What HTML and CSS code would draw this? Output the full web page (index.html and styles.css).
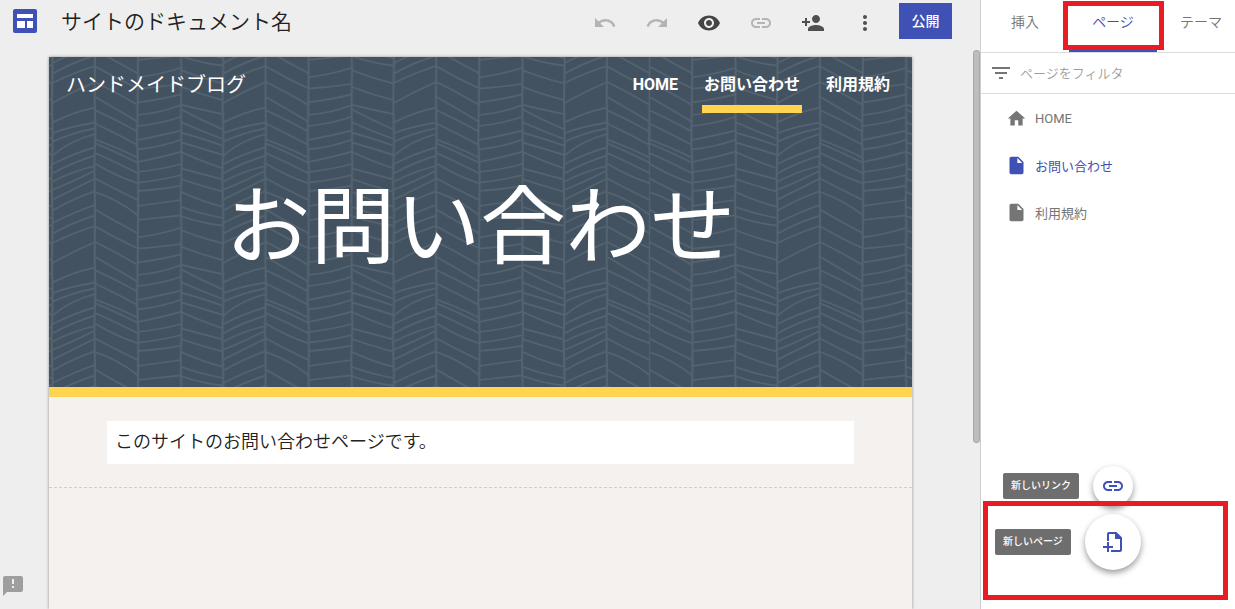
FILE: index.html
```html
<!DOCTYPE html>
<html lang="ja">
<head>
<meta charset="utf-8">
<title>サイトのドキュメント名</title>
<link rel="stylesheet" href="styles.css">
</head>
<body>
<main class="editor">
  <header class="toolbar">
    <svg class="logo" viewBox="0 0 24 24" aria-hidden="true"><rect width="24" height="24" rx="2" fill="#3f51b5"/><path fill="#fff" d="M4 5h16v4H4zM4 12h8v7H4zM14 12h6v7h-6z"/></svg>
    <input class="doc-name" type="text" aria-label="ドキュメント名" value="サイトのドキュメント名">
    <div class="tools">
      <button class="tool faded" aria-label="元に戻す"><svg viewBox="0 0 24 24"><path d="M12.500 8c-2.650 0-5.050.99-6.900 2.600L2 7v9h9l-3.620-3.620c1.390-1.160 3.160-1.880 5.120-1.880 3.540 0 6.550 2.310 7.600 5.500l2.370-.78C21.080 11.030 17.150 8 12.500 8z"/></svg></button>
      <button class="tool faded" aria-label="やり直す"><svg viewBox="0 0 24 24"><path d="M18.400 10.600C16.550 8.990 14.150 8 11.500 8c-4.650 0-8.580 3.030-9.960 7.220L3.900 16c1.050-3.190 4.050-5.500 7.600-5.500 1.950 0 3.730.72 5.120 1.880L13 16h9V7l-3.600 3.600z"/></svg></button>
      <button class="tool preview" aria-label="プレビュー"><svg viewBox="0 0 24 24"><path d="M12 4.500C7 4.500 2.730 7.610 1 12c1.730 4.390 6 7.500 11 7.500s9.270-3.110 11-7.500c-1.730-4.390-6-7.500-11-7.500zM12 17c-2.760 0-5-2.240-5-5s2.240-5 5-5 5 2.240 5 5-2.240 5-5 5zm0-8c-1.660 0-3 1.340-3 3s1.340 3 3 3 3-1.340 3-3-1.340-3-3-3z"/></svg></button>
      <button class="tool faded" aria-label="リンクをコピー"><svg viewBox="0 0 24 24"><path d="M3.900 12c0-1.710 1.390-3.100 3.100-3.100h4V7H7c-2.760 0-5 2.240-5 5s2.240 5 5 5h4v-1.900H7c-1.710 0-3.100-1.390-3.100-3.100zM8 13h8v-2H8v2zm9-6h-4v1.900h4c1.710 0 3.100 1.390 3.100 3.100s-1.390 3.100-3.100 3.100h-4V17h4c2.760 0 5-2.240 5-5s-2.240-5-5-5z"/></svg></button>
      <button class="tool" aria-label="他のユーザーと共有"><svg viewBox="0 0 24 24"><path d="M15 12c2.210 0 4-1.790 4-4s-1.790-4-4-4-4 1.790-4 4 1.790 4 4 4zm-9-2V7H4v3H1v2h3v3h2v-3h3v-2H6zm9 4c-2.670 0-8 1.340-8 4v2h16v-2c0-2.660-5.330-4-8-4z"/></svg></button>
      <button class="tool" aria-label="その他"><svg viewBox="0 0 24 24"><path d="M12 8c1.100 0 2-.9 2-2s-.9-2-2-2-2 .9-2 2 .9 2 2 2zm0 2c-1.100 0-2 .9-2 2s.9 2 2 2 2-.9 2-2-.9-2-2-2zm0 6c-1.100 0-2 .9-2 2s.9 2 2 2 2-.9 2-2-.9-2-2-2z"/></svg></button>
    </div>
    <button class="publish">公開</button>
  </header>

  <article class="site">
    <header class="hero">
      <svg class="hero-bg" aria-hidden="true">
        <defs>
          <g id="weave" fill="none" stroke="#53636f" stroke-width="5">
            <path d="M0 68Q70 34 128 23M0 100Q60 78 128 68M0 126Q60 98 128 85M0 168Q50 124 128 102M0 193Q60 162 128 142M0 221Q60 188 128 167M0 246Q60 214 128 198M0 270Q60 246 128 212M0 300Q60 270 128 236M0 333Q60 298 128 274M0 370Q70 335 128 315M0 402Q60 368 128 347M0 430Q60 400 128 378M0 490Q60 456 128 427"/>
            <path d="M128 -10Q190 25 257 65M128 30Q190 58 257 95M128 70Q190 100 257 135M128 118Q200 145 257 173M128 129Q190 155 257 188M128 158Q190 185 257 220M128 190Q190 228 257 250M128 235Q190 268 257 300M128 275Q200 300 257 345M128 328Q190 365 257 400M128 378Q190 415 257 445M128 425Q190 455 257 495"/>
            <path d="M257 45Q330 38 387 15M257 78Q330 70 387 50M257 120Q330 106 387 92M257 148Q330 140 387 119M257 186Q330 172 387 155M257 216Q330 208 387 192M257 248Q330 240 387 225M257 273Q330 268 387 257M257 318Q330 308 387 300M257 360Q330 352 387 346M257 412Q330 402 387 383M257 446Q330 440 387 432M257 487Q330 478 387 463"/>
            <path d="M387 14Q440 28 512 42M387 28Q450 62 512 88M387 66Q440 90 512 117M387 98Q440 112 512 137M387 127Q450 145 512 165M387 155Q440 180 512 205M387 205Q450 222 512 238M387 237Q440 255 512 275M387 275Q450 305 512 320M387 320Q440 340 512 354M387 348Q450 370 512 377M387 390Q440 412 512 430M387 440Q450 465 512 480"/>
          </g>
          <g id="tile">
            <use href="#weave"/><use href="#weave" y="-480"/><use href="#weave" y="480"/>
            <path d="M0 0L2 120L-1 240L2 360L0 480M128 0L130 90L127 200L129 330L128 480M257 0L255 120L259 220L257 480M387 0L389 200L386 300L388 380L387 480M512 0L514 120L511 240L514 360L512 480" fill="none" stroke="#53636f" stroke-width="6"/>
          </g>
          <pattern id="weave-left" width="512" height="480" x="9" y="129" patternUnits="userSpaceOnUse" patternTransform="scale(.33333)"><use href="#tile"/></pattern>
          <pattern id="weave-right" width="512" height="480" x="1672" y="129" patternUnits="userSpaceOnUse" patternTransform="scale(.33333)"><use href="#tile"/></pattern>
        </defs>
        <rect width="100%" height="100%" fill="#435261"/>
        <rect width="601" height="100%" fill="url(#weave-left)"/>
        <rect x="601" width="100%" height="100%" fill="url(#weave-right)"/>
      </svg>
      <div class="site-bar">
        <a class="site-name" href="#">ハンドメイドブログ</a>
        <nav class="site-nav">
          <a href="#">HOME</a>
          <a class="current" href="#">お問い合わせ</a>
          <a href="#">利用規約</a>
        </nav>
      </div>
      <h1 class="hero-title">お問い合わせ</h1>
    </header>
    <section class="section">
      <p class="text-block">このサイトのお問い合わせページです。</p>
    </section>
  </article>

  <div class="scroll-thumb"></div>
  <button class="feedback" aria-label="フィードバック"><svg viewBox="0 0 24 24"><path d="M20 2H4c-1.100 0-1.990.9-1.990 2L2 22l4-4h14c1.100 0 2-.9 2-2V4c0-1.100-.9-2-2-2zm-7 12h-2v-2h2v2zm0-4h-2V5h2v5z"/></svg></button>
</main>

<aside class="panel">
  <nav class="tabs">
    <button class="tab">挿入</button>
    <button class="tab active">ページ<span class="mark mark-tab"></span></button>
    <button class="tab">テーマ</button>
  </nav>
  <label class="filter">
    <svg viewBox="0 0 24 24" aria-hidden="true"><path d="M10 18h4v-2h-4v2zM3 6v2h18V6H3zm3 7h12v-2H6v2z"/></svg>
    <input type="text" aria-label="ページをフィルタ" placeholder="ページをフィルタ">
  </label>
  <ul class="pages">
    <li><a href="#"><svg viewBox="0 0 24 24"><path d="M10 20v-6h4v6h5v-8h3L12 3 2 12h3v8z"/></svg>HOME</a></li>
    <li><a class="selected" href="#"><svg viewBox="0 0 24 24"><path d="M6 2c-1.100 0-2 .9-2 2v16c0 1.100.9 2 2 2h12c1.100 0 2-.9 2-2V8l-6-6H6zm7 7V3.500L18.500 9H13z"/></svg>お問い合わせ</a></li>
    <li><a href="#"><svg viewBox="0 0 24 24"><path d="M6 2c-1.100 0-2 .9-2 2v16c0 1.100.9 2 2 2h12c1.100 0 2-.9 2-2V8l-6-6H6zm7 7V3.500L18.500 9H13z"/></svg>利用規約</a></li>
  </ul>
  <div class="actions">
    <div class="action">
      <label class="tip" for="new-link">新しいリンク</label>
      <button class="fab small" id="new-link"><svg viewBox="0 0 24 24"><path d="M3.900 12c0-1.710 1.390-3.100 3.100-3.100h4V7H7c-2.760 0-5 2.240-5 5s2.240 5 5 5h4v-1.900H7c-1.710 0-3.100-1.390-3.100-3.100zM8 13h8v-2H8v2zm9-6h-4v1.900h4c1.710 0 3.100 1.390 3.100 3.100s-1.390 3.100-3.100 3.100h-4V17h4c2.760 0 5-2.240 5-5s-2.240-5-5-5z"/></svg></button>
    </div>
    <div class="action">
      <label class="tip" for="new-page">新しいページ</label>
      <button class="fab" id="new-page"><svg viewBox="0 0 24 24"><path d="M7 11V4Q7 3 8 3H15L20 8V20Q20 21 19 21H10M2 17H12M7 12V22" fill="none" stroke="#3f51b5" stroke-width="2"/><path d="M14 2L21 9H14z"/></svg></button>
    </div>
  </div>
  <div class="mark mark-new"></div>
</aside>
</body>
</html>
```

FILE: styles.css
```css
* { box-sizing: border-box; }
body {
  margin: 0;
  height: 100vh;
  display: flex;
  overflow: hidden;
  background: #eeeeee;
  font-family: Roboto, "Noto Sans CJK JP", sans-serif;
  color: #212121;
}
button {
  border: 0;
  padding: 0;
  background: none;
  font: inherit;
  color: inherit;
}
a { color: inherit; text-decoration: none; }
svg { display: block; fill: currentColor; }

.editor {
  position: relative;
  flex: 1;
  min-width: 0;
  display: flex;
  flex-direction: column;
}
.toolbar {
  display: flex;
  align-items: center;
  padding: 3px 28px 0 13px;
  margin-bottom: 18px;
}
.logo { width: 24px; height: 24px; flex: none; }
.doc-name {
  flex: 1;
  min-width: 0;
  margin-left: 24px;
  padding: 0 0 2px;
  border: 0;
  background: none;
  font-family: "Noto Sans CJK JP", sans-serif;
  font-size: 21px;
  font-weight: 350;
  line-height: 30px;
  color: #212121;
}
.tools { display: flex; margin-right: 8px; }
.tool {
  width: 52px;
  height: 36px;
  padding-top: 3px;
  display: grid;
  place-items: center;
  color: #505050;
}
.tool svg { width: 24px; height: 24px; }
.tool.preview { color: #454545; }
.tool.faded { color: #b4b4b4; }
.publish {
  width: 53px;
  height: 36px;
  padding-bottom: 3px;
  background: #3f51b5;
  color: #fff;
  font-size: 14px;
  font-weight: 500;
}

.site {
  flex: 1;
  margin: 0 68px 0 49px;
  background: #f5f1ee;
  box-shadow: 0 0 3px rgba(0, 0, 0, .4);
}
.hero {
  position: relative;
  border-bottom: 10px solid #ffd54f;
  padding-bottom: 99px;
  color: #fff;
}
.hero-bg { position: absolute; inset: 0; width: 100%; height: 100%; }
.site-bar {
  position: relative;
  display: flex;
  justify-content: space-between;
  align-items: flex-start;
  padding: 13px 20px 0 17px;
}
.site-name { font-size: 20px; line-height: 30px; font-weight: 400; }
.site-nav { display: flex; gap: 22px; font-size: 16px; font-weight: 700; line-height: 30px; }
.site-nav a { padding: 0 2px 5px; border-bottom: 8px solid transparent; }
.site-nav .current { border-color: #ffd54f; }
.hero-title {
  position: relative;
  margin: 55px 0 0;
  font-size: 85px;
  font-weight: 400;
  line-height: 120px;
  text-align: center;
}
.section { padding: 24px 58px 23px; border-bottom: 1px dashed #d0cccb; }
.text-block {
  margin: 0;
  padding: 6px 8px 7px;
  background: #fff;
  font-size: 18px;
  font-weight: 350;
  line-height: 30px;
}
.scroll-thumb {
  position: absolute;
  right: 0;
  top: 50px;
  width: 7px;
  height: 393px;
  border: 1px solid #a8a8a8;
  border-radius: 3px;
  background: #bdbdbd;
}
.feedback { position: absolute; left: 1px; bottom: 11px; color: #9e9e9e; }
.feedback svg { width: 24px; height: 24px; }

.panel {
  position: relative;
  width: 255px;
  flex: none;
  display: flex;
  flex-direction: column;
  overflow: hidden;
  border-left: 1px solid #cfcfcf;
  background: #fff;
  color: #757575;
}
.tabs { display: flex; border-bottom: 1px solid #dcdcdc; }
.tab {
  position: relative;
  flex: 0 0 88px;
  height: 52px;
  padding-bottom: 7px;
  border-bottom: 3px solid transparent;
  font-size: 14px;
  font-weight: 350;
}
.tab.active { color: #3f51b5; border-color: #3f51b5; }
.mark { position: absolute; border: 5px solid #e81c24; pointer-events: none; }
.mark-tab { inset: 1px -7px -1px -6px; }
.mark-new { left: 2px; right: 7px; bottom: 9px; height: 99px; }
.filter {
  display: flex;
  align-items: center;
  gap: 7px;
  height: 41px;
  padding-left: 8px;
  border-bottom: 1px solid #dcdcdc;
}
.filter svg { width: 24px; height: 24px; flex: none; }
.filter input {
  flex: 1;
  min-width: 0;
  border: 0;
  padding: 0;
  font: inherit;
  font-size: 13px;
  font-weight: 350;
}
.filter input::placeholder { color: #9e9e9e; }
.pages { margin: 1px 0 0; padding: 0; list-style: none; font-size: 13px; }
.pages a {
  display: flex;
  align-items: center;
  gap: 8px;
  height: 47px;
  padding-left: 25px;
}
.pages svg { width: 21px; height: 21px; }
.pages .selected { color: #3f51b5; }
.actions {
  align-self: flex-start;
  display: flex;
  flex-direction: column;
  align-items: center;
  gap: 8px;
  margin: auto 0 39px 14px;
}
.action { display: flex; align-items: center; gap: 14px; }
.tip {
  padding: 0 8px;
  border-radius: 2px;
  background: #6e6e6e;
  color: #fff;
  font-size: 10px;
  font-weight: 500;
  line-height: 26px;
}
.fab {
  width: 56px;
  height: 56px;
  display: grid;
  place-items: center;
  border-radius: 50%;
  background: #fff;
  color: #3f51b5;
  box-shadow: 0 3px 6px rgba(0, 0, 0, .4);
}
.fab.small { width: 40px; height: 40px; }
.fab svg { width: 24px; height: 24px; }
```
